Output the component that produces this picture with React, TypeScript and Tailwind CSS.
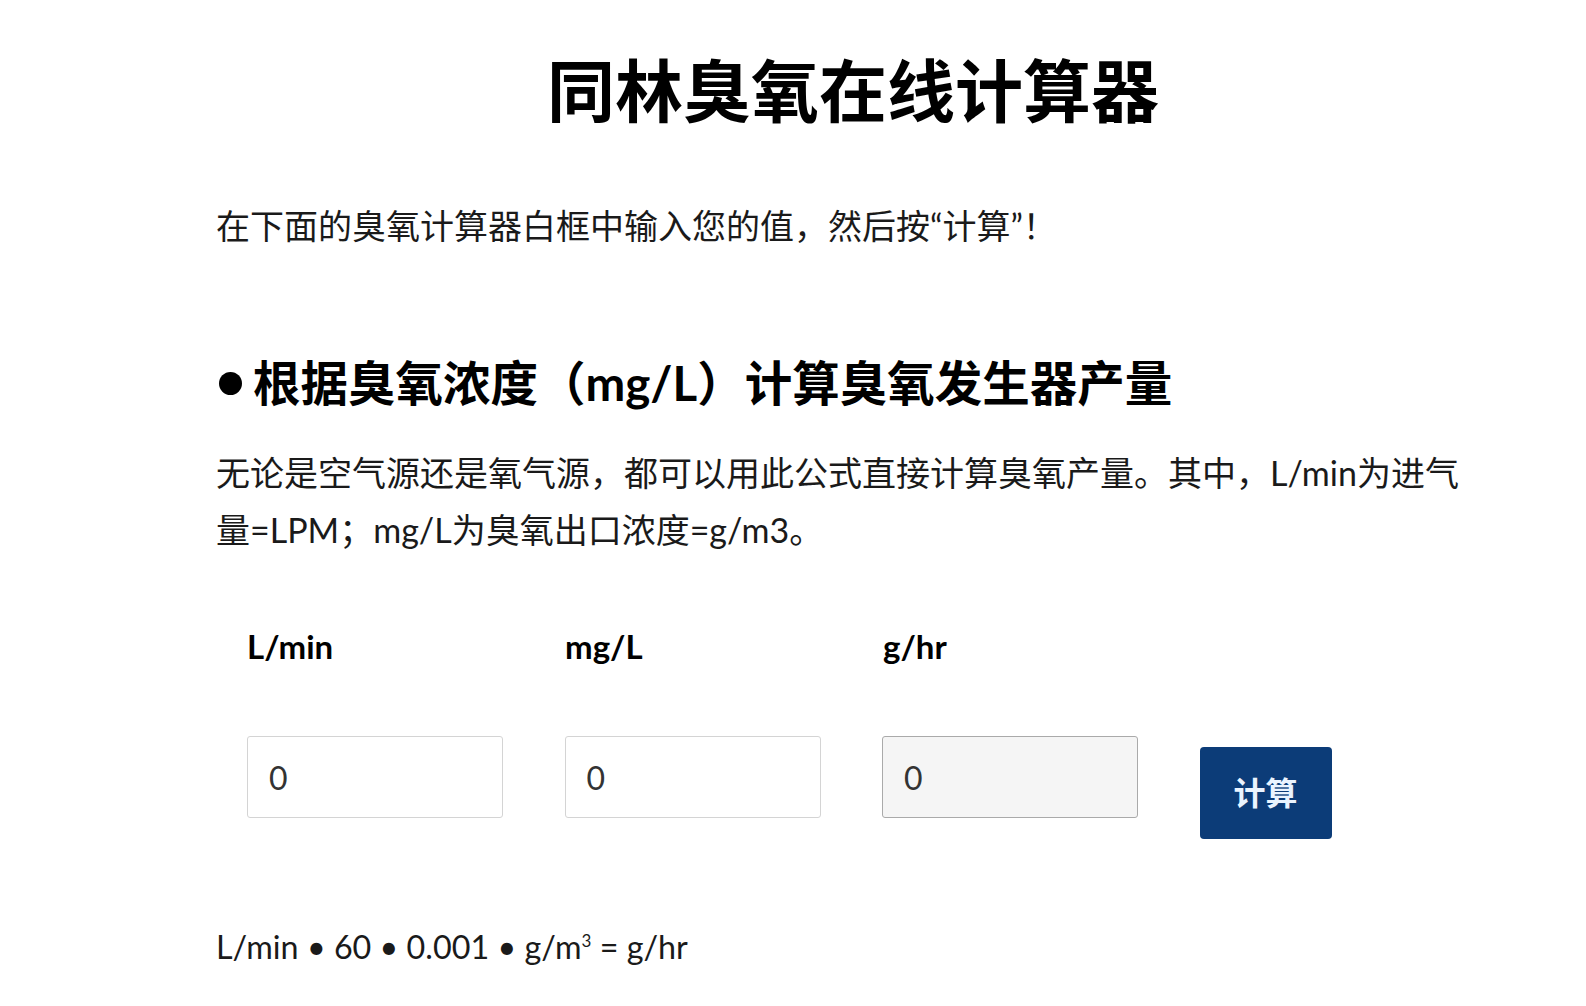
import { useState } from 'react'

const FONT = { fontFamily: 'Lato, "Noto Sans CJK SC", sans-serif' }

const FIELDS = [
  { key: 'lpm', label: 'L/min', readOnly: false },
  { key: 'mgl', label: 'mg/L', readOnly: false },
  { key: 'ghr', label: 'g/hr', readOnly: true },
]

export default function App() {
  const [values, setValues] = useState<Record<string, string>>({ lpm: '0', mgl: '0', ghr: '0' })

  function calc() {
    const lpm = parseFloat(values.lpm) || 0
    const mgl = parseFloat(values.mgl) || 0
    const out = lpm * 60 * 0.001 * mgl
    setValues(v => ({ ...v, ghr: String(Math.round(out * 1000) / 1000) }))
  }

  return (
    <div className="min-h-screen bg-white text-[#111]" style={FONT}>
      <div className="ml-[216px] w-[1250px] pt-[45px]">
        {/* Title */}
        <h1 className="pl-[24px] text-center text-[68px] font-bold leading-[92px] text-black">
          同林臭氧在线计算器
        </h1>

        <p className="mt-[60px] text-[34px] leading-[57px] text-[#1a1a1a]">
          在下面的臭氧计算器白框中输入您的值，然后按“计算”！
        </p>

        {/* Section heading */}
        <h2 className="mt-[99px] flex items-center text-[47.5px] font-bold leading-[60px] text-black">
          <span className="mr-[11px] ml-[3px] inline-block h-[23px] w-[23px] rounded-full bg-black" />
          根据臭氧浓度（mg/L）计算臭氧发生器产量
        </h2>

        <p className="mt-[31px] text-[34px] leading-[57px] text-[#1a1a1a]">
          无论是空气源还是氧气源，都可以用此公式直接计算臭氧产量。其中，L/min为进气量=LPM；mg/L为臭氧出口浓度=g/m3。
        </p>

        {/* Calculator */}
        <div className="mt-[68px] ml-[31px]">
          <div className="flex gap-[62px]">
            {FIELDS.map(f => (
              <div key={f.key} className="w-[256px] text-[33px] font-bold leading-[40px] text-black">
                {f.label}
              </div>
            ))}
          </div>
          <div className="mt-[70px] flex items-start gap-[61.5px]">
            {FIELDS.map(f => (
              <input
                key={f.key}
                value={values[f.key]}
                readOnly={f.readOnly}
                onChange={e => setValues(v => ({ ...v, [f.key]: e.target.value }))}
                className={`h-[82px] w-[256px] rounded-[3px] border px-[21px] text-[32px] text-[#333] outline-none ${
                  f.readOnly ? 'border-[#aaa] bg-[#f5f5f5]' : 'border-[#d4d4d4] bg-white'
                }`}
                style={FONT}
              />
            ))}
            <button
              onClick={calc}
              className="mt-[11px] h-[92px] w-[132px] rounded-[4px] bg-[#0c3c78] text-[32px] font-bold text-[#eaf4ff]"
              style={FONT}
            >
              计算
            </button>
          </div>
        </div>

        <p className="mt-[83px] text-[32.3px] leading-[50px] text-[#1a1a1a]">
          L/min • 60 • 0.001 • g/m<span className="relative -top-[12px] text-[17px]">3</span> = g/hr
        </p>
      </div>
    </div>
  )
}
